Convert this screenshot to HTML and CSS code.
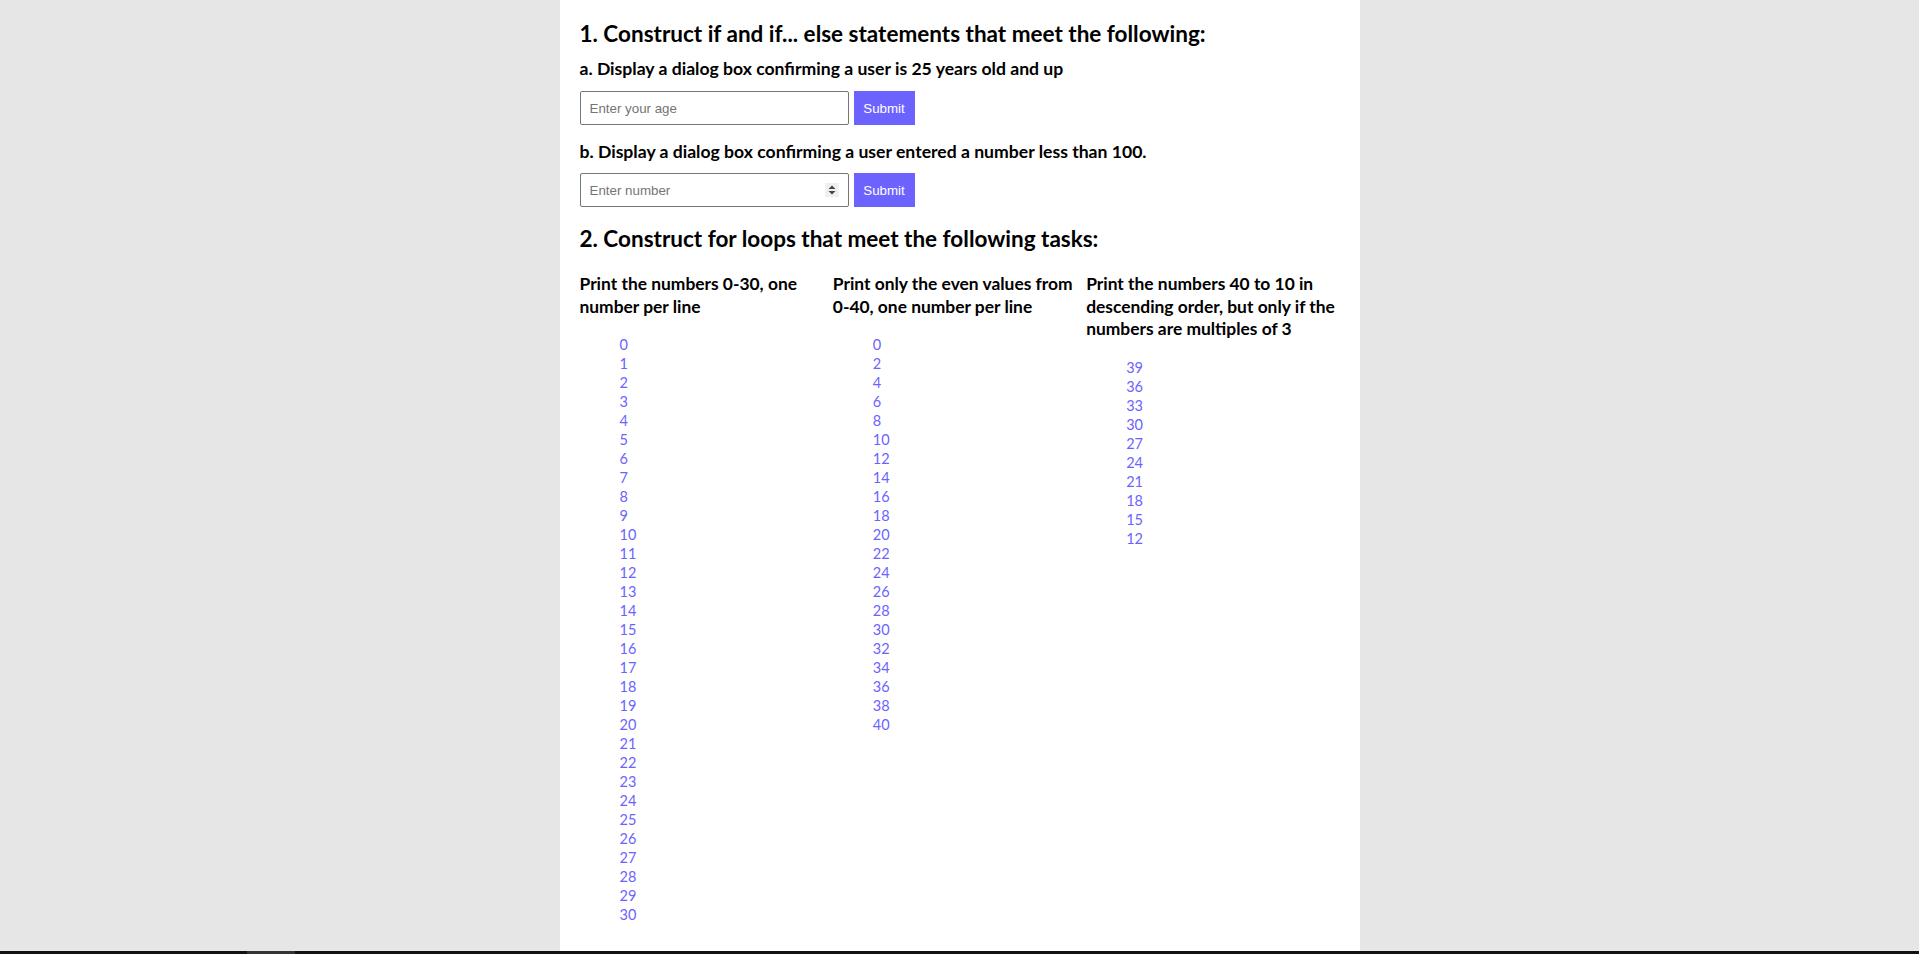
FILE: index.html
```html
<!DOCTYPE html>
<html lang="en">
<head>
<meta charset="utf-8">
<title>JavaScript Conditionals and Loops</title>
<link rel="stylesheet" href="styles.css">
</head>
<body>
<main class="page">
  <h1 class="title">1. Construct if and if... else statements that meet the following:</h1>
  <h3 class="task">a. Display a dialog box confirming a user is 25 years old and up</h3>
  <form class="entry">
    <input class="field" type="text" placeholder="Enter your age">
    <button class="submit" type="button">Submit</button>
  </form>
  <h3 class="task task-b">b. Display a dialog box confirming a user entered a number less than 100.</h3>
  <form class="entry entry-b">
    <span class="num-wrap">
      <input class="field field-num" type="number" placeholder="Enter number">
      <span class="spin"><svg width="14" height="14" viewBox="0 0 14 14"><path d="M3.5 6 L7 2.5 L10.5 6 Z" fill="#444"/><path d="M3.5 8 L7 11.5 L10.5 8 Z" fill="#444"/></svg></span>
    </span>
    <button class="submit" type="button">Submit</button>
  </form>
  <h2 class="title title-2">2. Construct for loops that meet the following tasks:</h2>
  <div class="loops">
    <section class="loop">
      <h4 class="loop-head">Print the numbers 0-30, one number per line</h4>
      <ul class="loop-list">
        <li>0</li><li>1</li><li>2</li><li>3</li><li>4</li><li>5</li><li>6</li><li>7</li><li>8</li><li>9</li><li>10</li><li>11</li><li>12</li><li>13</li><li>14</li><li>15</li><li>16</li><li>17</li><li>18</li><li>19</li><li>20</li><li>21</li><li>22</li><li>23</li><li>24</li><li>25</li><li>26</li><li>27</li><li>28</li><li>29</li><li>30</li>
      </ul>
    </section>
    <section class="loop">
      <h4 class="loop-head">Print only the even values from 0-40, one number per line</h4>
      <ul class="loop-list">
        <li>0</li><li>2</li><li>4</li><li>6</li><li>8</li><li>10</li><li>12</li><li>14</li><li>16</li><li>18</li><li>20</li><li>22</li><li>24</li><li>26</li><li>28</li><li>30</li><li>32</li><li>34</li><li>36</li><li>38</li><li>40</li>
      </ul>
    </section>
    <section class="loop">
      <h4 class="loop-head">Print the numbers 40 to 10 in descending order, but only if the numbers are multiples of 3</h4>
      <ul class="loop-list">
        <li>39</li><li>36</li><li>33</li><li>30</li><li>27</li><li>24</li><li>21</li><li>18</li><li>15</li><li>12</li>
      </ul>
    </section>
  </div>
</main>
<div class="taskbar"><span class="taskbar-item"></span></div>
</body>
</html>
```
FILE: styles.css
```css
html, body {
  margin: 0;
  padding: 0;
}
body {
  background: #e6e6e6;
  font-family: Lato, "Open Sans", sans-serif;
  color: #000;
  overflow: hidden;
}
.page {
  width: 800px;
  box-sizing: border-box;
  margin: 0 auto;
  padding: 21px 20px 0;
  min-height: 951px;
  background: #fff;
}
.title {
  margin: 0;
  font-size: 22.5px;
  line-height: 26px;
  font-weight: 700;
}
.title-2 {
  margin-top: 19px;
}
.task {
  margin: 11px 0 0;
  font-size: 17.6px;
  line-height: 22px;
  font-weight: 700;
}
.task-b {
  margin-top: 16px;
}
.entry {
  display: flex;
  gap: 5px;
  margin: 11px 0 0;
}
.entry-b {
  margin-top: 10px;
}
.num-wrap {
  position: relative;
  display: block;
}
.field {
  display: block;
  width: 269px;
  height: 34px;
  box-sizing: border-box;
  border: 1px solid #767676;
  border-radius: 2px;
  padding: 0 9px;
  margin: 0;
  font-family: "Liberation Sans", Arial, sans-serif;
  font-size: 13.33px;
  color: #000;
  background: #fff;
}
.field::placeholder {
  color: #757575;
}
.field-num {
  -moz-appearance: textfield;
}
.field-num::-webkit-inner-spin-button,
.field-num::-webkit-outer-spin-button {
  -webkit-appearance: none;
  margin: 0;
}
.spin {
  position: absolute;
  right: 10px;
  top: 10px;
  width: 14px;
  height: 14px;
  background: #efefef;
  display: block;
}
.spin svg {
  display: block;
}
.submit {
  width: 61px;
  height: 34px;
  border: 0;
  border-radius: 0;
  padding: 0;
  margin: 0;
  background: #6c63ff;
  color: #fff;
  font-family: "Liberation Sans", Arial, sans-serif;
  font-size: 13.33px;
}
.loops {
  display: grid;
  grid-template-columns: repeat(3, 1fr);
  margin-top: 21px;
}
.loop-head {
  margin: 0;
  font-size: 17.4px;
  line-height: 22.6px;
  font-weight: 700;
}
.loop-list {
  list-style: none;
  margin: 17px 0 0;
  padding: 0 0 0 40px;
  font-size: 14.5px;
  line-height: 19px;
  color: #6c63ff;
}
.taskbar {
  position: fixed;
  left: 0;
  right: 0;
  bottom: 0;
  height: 3px;
  background: #121212;
}
.taskbar-item {
  position: absolute;
  left: 247px;
  top: 0;
  width: 48px;
  height: 3px;
  background: #333;
}
```
